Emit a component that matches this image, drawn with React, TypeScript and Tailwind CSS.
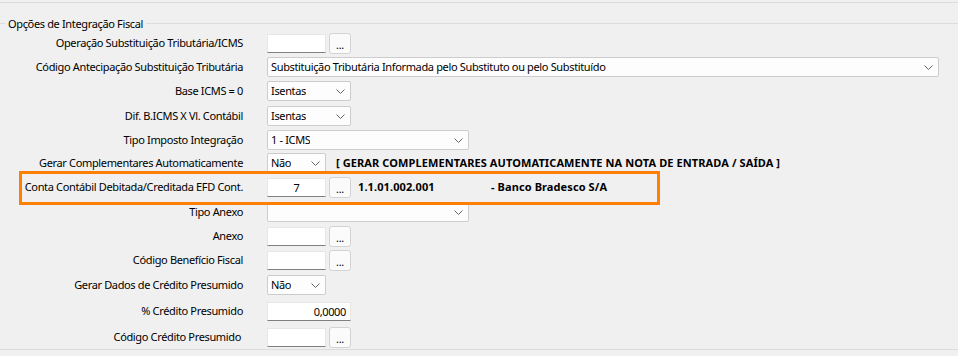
import { ReactNode } from 'react';

function Chevron() {
  return (
    <svg width="9" height="5" viewBox="0 0 9 5" className="shrink-0">
      <polyline points="0.5,0.5 4.5,4.5 8.5,0.5" fill="none" stroke="#666666" strokeWidth="1" />
    </svg>
  );
}

function TextBox({ value = '', width = 'w-[59px]', align = 'text-left' }: { value?: string; width?: string; align?: string }) {
  return (
    <div
      className={`${width} ${align} h-[19px] bg-white border border-[#e6e6e6] border-b-[#808080] px-[4px] leading-[17px]`}
    >
      {value}
    </div>
  );
}

function DotsButton() {
  return (
    <div className="ml-[3px] w-[22px] h-[21px] rounded-[3px] border border-[#d3d3d3] bg-[#fbfbfb] flex items-end justify-center pb-[3px] leading-none">
      ...
    </div>
  );
}

function Select({ value = '', width }: { value?: string; width: string }) {
  return (
    <div
      className={`${width} h-[20px] bg-[#fdfdfd] border border-[#cccccc] rounded-[2px] flex items-center justify-between pl-[3px] pr-[5px]`}
    >
      <span className="truncate">{value}</span>
      <Chevron />
    </div>
  );
}

function Row({ label, children, className = '' }: { label: string; children?: ReactNode; className?: string }) {
  return (
    <div className={`flex items-center h-[24px] ${className}`}>
      <div className="w-[243px] shrink-0 text-right whitespace-nowrap">{label}</div>
      <div className="ml-[24px] flex items-center">{children}</div>
    </div>
  );
}

export default function App() {
  return (
    <div className="w-[958px] h-[356px] overflow-hidden bg-[#f0f0f0] text-[11px] tracking-[-0.35px] text-[#000] font-['Noto_Sans',sans-serif]">
      <div className="mt-[2px] border-t border-[#dcdcdc]" />

      {/* Fieldset header */}
      <div className="mt-[20px] flex items-center h-[1px]">
        <div className="w-[5px] border-t border-[#dcdcdc]" />
        <span className="px-[3px] whitespace-nowrap leading-none">Opções de Integração Fiscal</span>
        <div className="flex-1 border-t border-[#dcdcdc]" />
      </div>

      <div className="mt-[7px]">
        <Row label="Operação Substituição Tributária/ICMS">
          <TextBox />
          <DotsButton />
        </Row>
        <Row label="Código Antecipação Substituição Tributária">
          <Select width="w-[672px]" value="Substituição Tributária Informada pelo Substituto ou pelo Substituído" />
        </Row>
        <Row label="Base ICMS = 0">
          <Select width="w-[84px]" value="Isentas" />
        </Row>
        <Row label="Dif. B.ICMS X Vl. Contábil" className="mt-[1px]">
          <Select width="w-[84px]" value="Isentas" />
        </Row>
        <Row label="Tipo Imposto Integração">
          <Select width="w-[202px]" value="1 - ICMS" />
        </Row>
        <Row label="Gerar Complementares Automaticamente" className="-mt-[1px]">
          <Select width="w-[59px]" value="Não" />
          <span className="ml-[10px] font-bold tracking-[0.1px] whitespace-nowrap">
            [ GERAR COMPLEMENTARES AUTOMATICAMENTE NA NOTA DE ENTRADA / SAÍDA ]
          </span>
        </Row>

        {/* Highlighted row */}
        <div className="relative">
          <Row label="Conta Contábil Debitada/Creditada EFD Cont.">
            <TextBox value="7" align="text-center" />
            <DotsButton />
            <span className="ml-[7px] w-[133px] font-bold tracking-[0.1px]">1.1.01.002.001</span>
            <span className="font-bold tracking-[0.1px] whitespace-nowrap">- Banco Bradesco S/A</span>
          </Row>
          <div className="absolute left-[19px] top-[-4px] w-[641px] h-[34px] border-[3px] border-[#ff7f00] pointer-events-none" />
        </div>

        <Row label="Tipo Anexo" className="mt-[1px]">
          <Select width="w-[202px]" />
        </Row>
        <Row label="Anexo">
          <TextBox />
          <DotsButton />
        </Row>
        <Row label="Código Benefício Fiscal">
          <TextBox />
          <DotsButton />
        </Row>
        <Row label="Gerar Dados de Crédito Presumido" className="mt-[1px]">
          <Select width="w-[59px]" value="Não" />
        </Row>
        <Row label="% Crédito Presumido" className="mt-[2px]">
          <TextBox width="w-[84px]" align="text-right" value="0,0000" />
        </Row>
        <div className="flex items-center h-[24px] mt-[2px]">
          <div className="w-[241px] shrink-0 text-right whitespace-nowrap">Código Crédito Presumido</div>
          <div className="ml-[26px] flex items-center">
            <TextBox />
            <DotsButton />
          </div>
        </div>
      </div>

      <div className="border-t border-[#dcdcdc]" />
    </div>
  );
}
